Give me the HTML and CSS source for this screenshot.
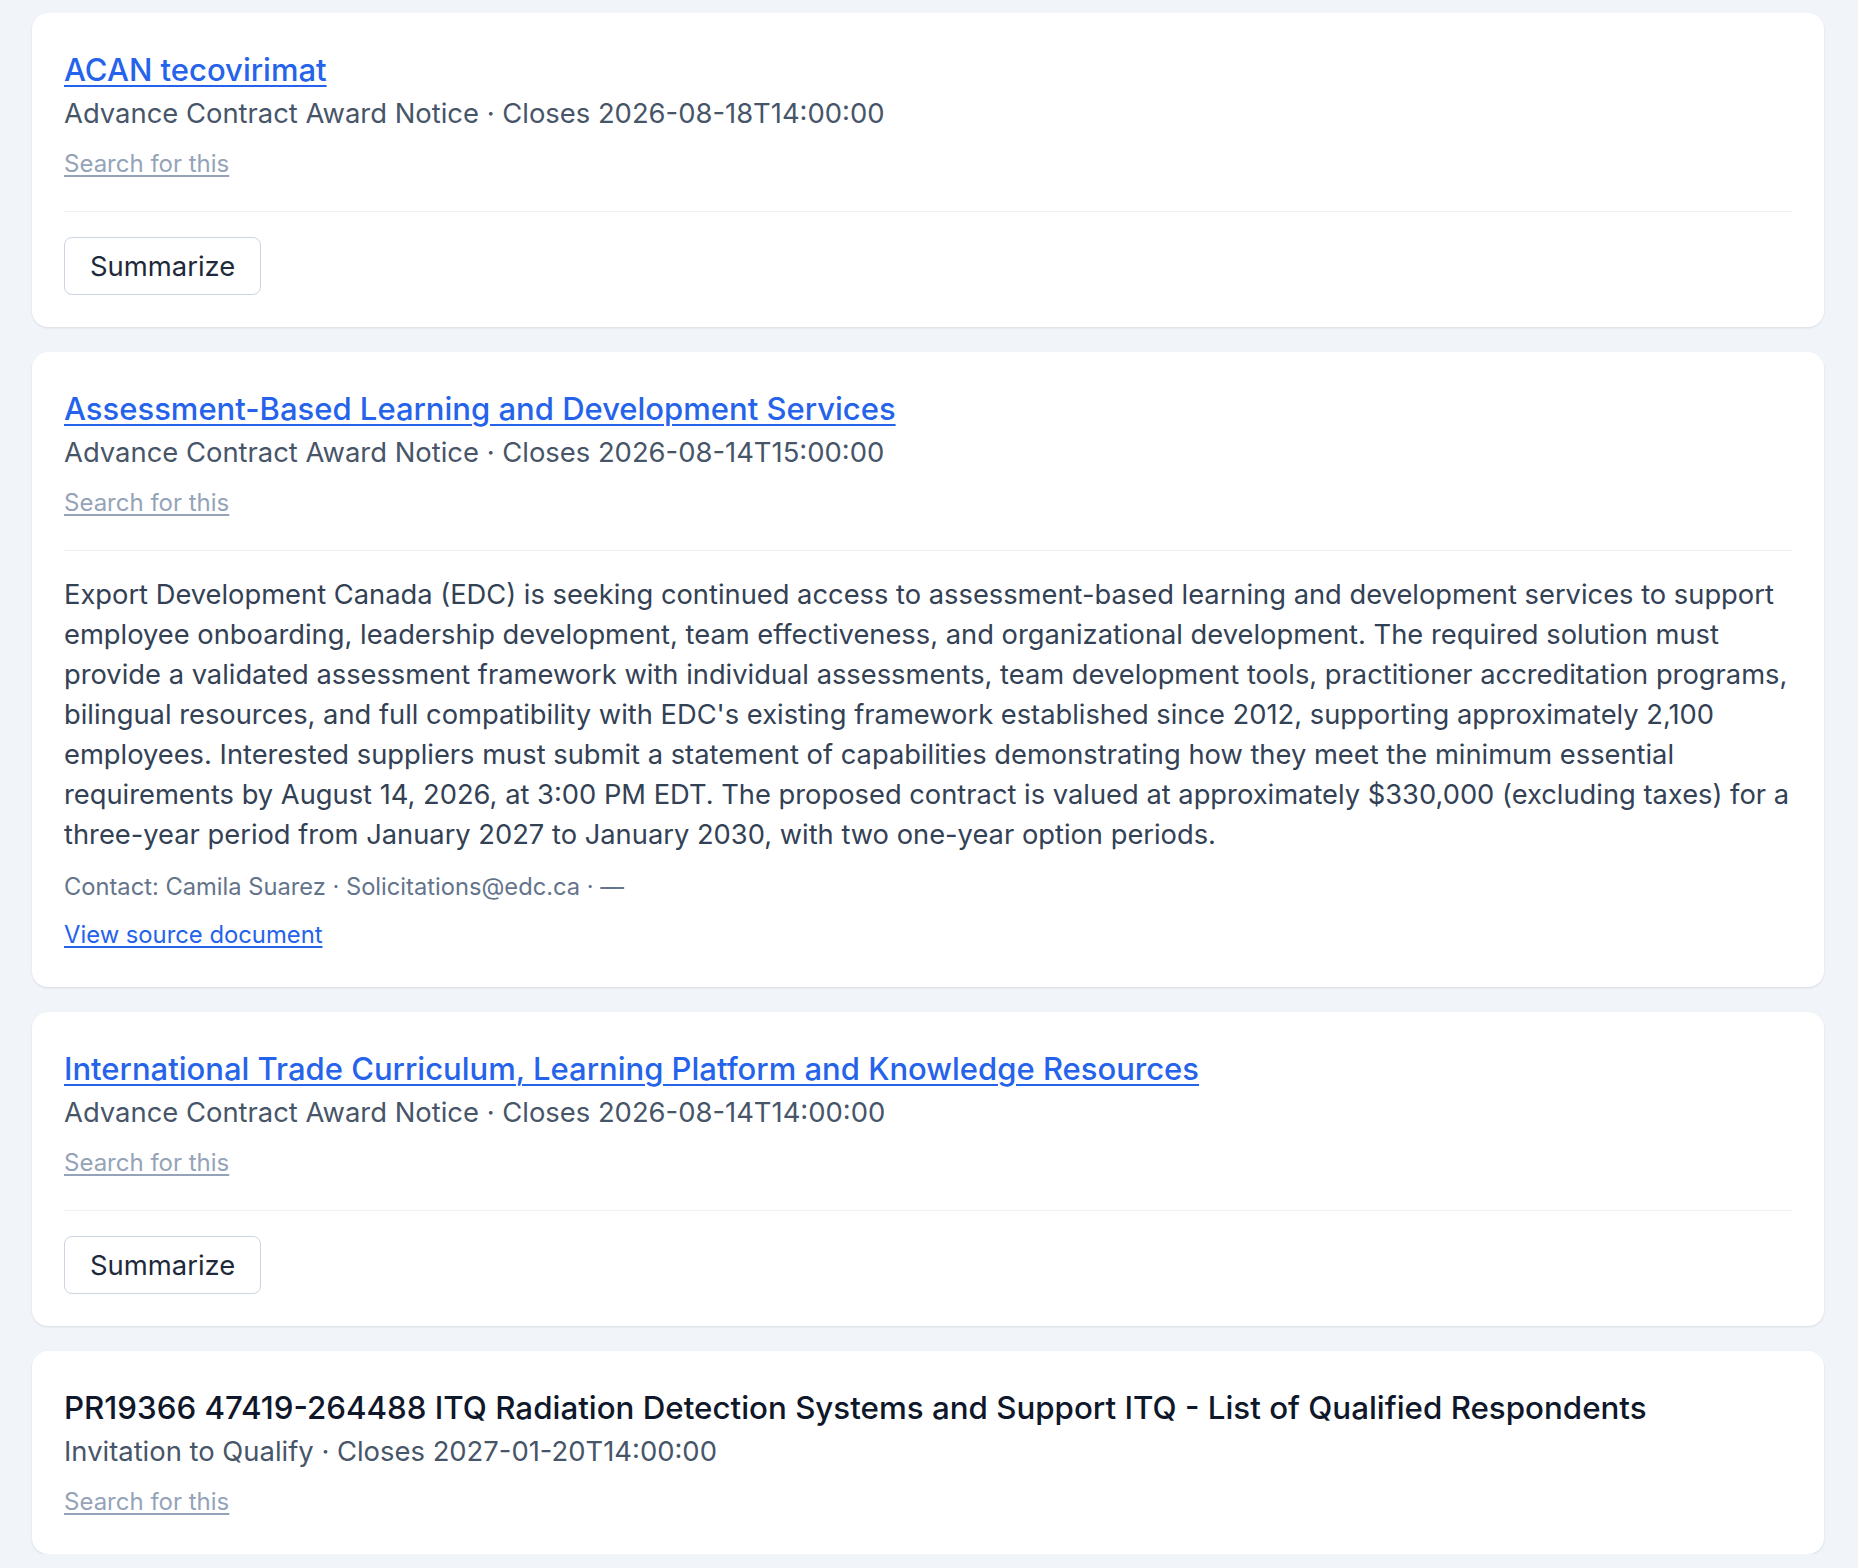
FILE: index.html
```html
<!DOCTYPE html>
<html lang="en">
<head>
<meta charset="utf-8">
<title>Opportunities</title>
<link rel="stylesheet" href="styles.css">
</head>
<body>
<main class="list">
  <article class="card">
    <a class="title link" href="#">ACAN tecovirimat</a>
    <div class="meta">Advance Contract Award Notice · Closes 2026-08-18T14:00:00</div>
    <a class="search" href="#">Search for this</a>
    <hr class="divider">
    <div class="actions"><button class="btn" type="button">Summarize</button></div>
  </article>

  <article class="card">
    <a class="title link" href="#">Assessment-Based Learning and Development Services</a>
    <div class="meta">Advance Contract Award Notice · Closes 2026-08-14T15:00:00</div>
    <a class="search" href="#">Search for this</a>
    <hr class="divider">
    <p class="summary">Export Development Canada (EDC) is seeking continued access to assessment-based learning and development services to support employee onboarding, leadership development, team effectiveness, and organizational development. The required solution must provide a validated assessment framework with individual assessments, team development tools, practitioner accreditation programs, bilingual resources, and full compatibility with EDC's existing framework established since 2012, supporting approximately 2,100 employees. Interested suppliers must submit a statement of capabilities demonstrating how they meet the minimum essential requirements by August 14, 2026, at 3:00 PM EDT. The proposed contract is valued at approximately $330,000 (excluding taxes) for a three-year period from January 2027 to January 2030, with two one-year option periods.</p>
    <div class="contact">Contact: Camila Suarez · Solicitations@edc.ca · —</div>
    <a class="source" href="#">View source document</a>
  </article>

  <article class="card">
    <a class="title link" href="#">International Trade Curriculum, Learning Platform and Knowledge Resources</a>
    <div class="meta">Advance Contract Award Notice · Closes 2026-08-14T14:00:00</div>
    <a class="search" href="#">Search for this</a>
    <hr class="divider">
    <div class="actions"><button class="btn" type="button">Summarize</button></div>
  </article>

  <article class="card">
    <div class="title plain">PR19366 47419-264488 ITQ Radiation Detection Systems and Support ITQ - List of Qualified Respondents</div>
    <div class="meta">Invitation to Qualify · Closes 2027-01-20T14:00:00</div>
    <a class="search" href="#">Search for this</a>
  </article>
</main>
</body>
</html>
```

FILE: styles.css
```css
html, body {
  margin: 0;
  padding: 0;
  background: #f1f5f9;
}

body {
  font-family: "Inter", "Liberation Sans", sans-serif;
  color: #334155;
}

.list {
  display: flex;
  flex-direction: column;
  gap: 25px;
  margin: 13px 34px 0 32px;
}

.card {
  display: flex;
  flex-direction: column;
  align-items: flex-start;
  background: #ffffff;
  border-radius: 16px;
  padding: 32px;
  box-shadow: 0 1px 3px rgba(15, 23, 42, 0.07), 0 1px 2px rgba(15, 23, 42, 0.04);
}

.title {
  font-size: 31px;
  line-height: 52px;
  font-weight: 500;
  margin-top: -1px;
  margin-bottom: 1px;
}

.title.link {
  color: #2563eb;
  text-decoration: underline;
  text-underline-offset: 4px;
  text-decoration-thickness: 2px;
}

.title.plain {
  font-size: 31.3px;
  color: #0f172a;
}

.meta {
  font-size: 27.4px;
  line-height: 32px;
  color: #475569;
}

.search {
  margin-top: 15px;
  font-size: 24px;
  line-height: 40px;
  color: #94a3b8;
  text-decoration: underline;
  text-underline-offset: 3px;
}

.divider {
  align-self: stretch;
  border: 0;
  border-top: 1px solid #eef2f7;
  margin: 27px 0 24px;
  height: 0;
}

.actions {
  margin-top: 1px;
}

.btn {
  font-family: inherit;
  font-size: 27.4px;
  line-height: 32px;
  color: #1e293b;
  background: #ffffff;
  border: 1.5px solid #cbd5e1;
  border-radius: 8px;
  height: 58px;
  padding: 0 25px;
}

.summary {
  margin: 0;
  font-size: 27.3px;
  line-height: 40px;
  color: #334155;
}

.contact {
  margin-top: 16px;
  font-size: 23.7px;
  line-height: 32px;
  color: #64748b;
}

.source {
  margin-top: 12px;
  font-size: 23.8px;
  line-height: 40px;
  color: #2563eb;
  text-decoration: underline;
  text-underline-offset: 3px;
}
```
